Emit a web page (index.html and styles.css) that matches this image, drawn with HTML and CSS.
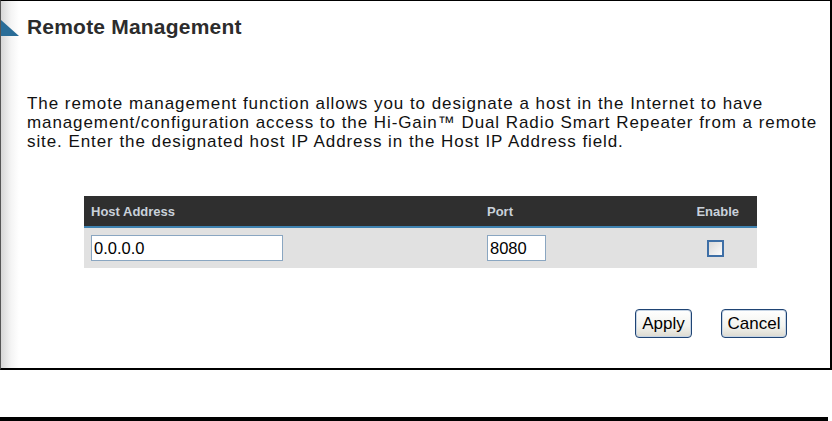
FILE: index.html
```html
<!DOCTYPE html>
<html>
<head>
<meta charset="utf-8">
<link rel="stylesheet" href="styles.css">
</head>
<body>
<div class="panel">
  <div class="title-row">
    <svg class="tri" width="18" height="16" viewBox="0 0 18 16"><polygon points="0,0 18,16 0,16" fill="#2a6d98"/></svg>
    <h1 class="title">Remote Management</h1>
  </div>
  <p class="desc">The remote management function allows you to designate a host in the Internet to have management/configuration access to the Hi-Gain™ Dual Radio Smart Repeater from a remote site. Enter the designated host IP Address in the Host IP Address field.</p>
  <div class="table">
    <div class="thead">
      <div class="th c1">Host Address</div>
      <div class="th c2">Port</div>
      <div class="th c3">Enable</div>
    </div>
    <div class="trow">
      <div class="td c1"><span class="field host">0.0.0.0</span></div>
      <div class="td c2"><span class="field port">8080</span></div>
      <div class="td c3"><span class="check"></span></div>
    </div>
  </div>
  <div class="actions">
    <span class="btn apply">Apply</span>
    <span class="btn cancel">Cancel</span>
  </div>
</div>
<div class="rule"></div>
</body>
</html>
```
FILE: styles.css
```css
html, body {
  margin: 0;
  padding: 0;
  background: #fff;
  font-family: "Liberation Sans", Arial, sans-serif;
  color: #000;
}
.panel {
  box-sizing: border-box;
  width: 832px;
  height: 370px;
  border-top: 1px solid #000;
  border-right: 2px solid #000;
  border-bottom: 2px solid #000;
  border-left: 1px solid #555;
  background: linear-gradient(to right, #d6d6d6 0px, #f4f4f4 10px, #fff 18px);
  padding: 14px 0 0 0;
  display: flex;
  flex-direction: column;
}
.title-row {
  display: flex;
  align-items: flex-start;
  height: 24px;
}
.tri {
  display: block;
  margin-top: 5px;
  flex: none;
}
.title {
  margin: 0 0 0 8px;
  font-size: 21px;
  line-height: 24px;
  font-weight: bold;
  color: #2c2c2c;
  letter-spacing: 0.2px;
}
.desc {
  margin: 55px 0 0 26px;
  font-size: 17px;
  line-height: 19px;
  letter-spacing: 0.9px;
  word-spacing: 0.2px;
  color: #111;
}
.table {
  margin: 45px 0 0 83px;
  width: 673px;
}
.thead {
  display: grid;
  grid-template-columns: 396px 197px 80px;
  height: 30px;
  background: #2f2f2f;
  border-bottom: 2px solid #3f82b0;
  align-items: center;
}
.th {
  font-size: 13px;
  font-weight: bold;
  color: #c9d1da;
}
.th.c1 { padding-left: 7px; }
.th.c2 { padding-left: 7px; }
.th.c3 { text-align: right; padding-right: 18px; }
.trow {
  display: grid;
  grid-template-columns: 396px 197px 80px;
  height: 40px;
  background: #e1e1e1;
  align-items: center;
}
.td.c1 { padding-left: 7px; }
.td.c2 { padding-left: 7px; }
.td.c3 { display: flex; justify-content: center; padding-right: 4px; }
.field {
  display: block;
  box-sizing: border-box;
  height: 26px;
  border: 1px solid #8aa6c1;
  background: #fff;
  font-size: 16.5px;
  line-height: 24px;
  padding-left: 2px;
  color: #000;
}
.host { width: 192px; }
.port { width: 59px; }
.check {
  display: block;
  box-sizing: border-box;
  width: 17px;
  height: 17px;
  border: 2px solid #3e6fa6;
  background: linear-gradient(135deg, #d9d9d9, #fbfbfb);
}
.actions {
  display: flex;
  justify-content: flex-end;
  gap: 29px;
  margin: 41px 43px 0 0;
}
.btn {
  box-sizing: border-box;
  height: 29px;
  border: 1px solid #1f4474;
  border-radius: 4px;
  background: linear-gradient(to bottom, #ffffff 0%, #f3f3ee 60%, #dcdad0 100%);
  box-shadow: inset 0 0 0 1px #c6d4e4;
  font-size: 17px;
  line-height: 27px;
  text-align: center;
  color: #000;
}
.apply { width: 57px; }
.cancel { width: 66px; }
.rule {
  width: 828px;
  height: 4px;
  background: #000;
  margin-top: 47px;
}
```
